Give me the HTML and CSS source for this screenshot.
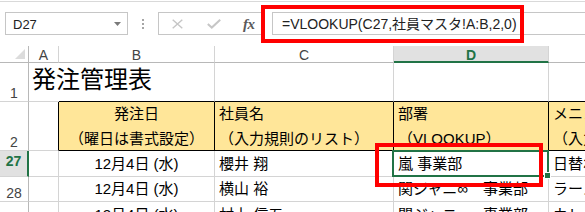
FILE: index.html
```html
<!DOCTYPE html>
<html lang="ja">
<head>
<meta charset="utf-8">
<title>発注管理表</title>
<link rel="stylesheet" href="styles.css">
</head>
<body>
<div class="app">
  <div class="toolbar">
    <div class="namebox">
      <span class="namebox-text">D27</span>
      <svg class="caret" width="7" height="4" viewBox="0 0 7 4"><polygon points="0,0 7,0 3.5,4" fill="#7a7a7a"/></svg>
    </div>
    <div class="grip"><i></i><i></i><i></i></div>
    <div class="fxbtns">
      <svg class="ico-x" width="11" height="10" viewBox="0 0 11 10"><path d="M0.7 0.7 L10.3 9.3 M10.3 0.7 L0.7 9.3" stroke="#c6c6c6" stroke-width="1.4" fill="none"/></svg>
      <svg class="ico-ok" width="14" height="10" viewBox="0 0 14 10"><path d="M0.8 5 L4.8 8.6 L13.2 0.8" stroke="#c6c6c6" stroke-width="2" fill="none"/></svg>
      <span class="fx">fx</span>
    </div>
    <div class="formula">=VLOOKUP(C27,社員マスタ!A:B,2,0)</div>
  </div>

  <div class="sheet">
    <!-- column headers -->
    <div class="c corner"><svg width="10" height="10" viewBox="0 0 10 10"><polygon points="10,0 10,10 0,10" fill="#dcdcdc"/></svg></div>
    <div class="c ch">A</div>
    <div class="c ch">B</div>
    <div class="c ch">C</div>
    <div class="c ch ch-sel">D</div>
    <div class="c ch">E</div>

    <!-- row 1 -->
    <div class="c rh">1</div>
    <div class="c title-cell"><span class="title">発注管理表</span></div>
    <div class="c top-edge"></div>
    <div class="c top-edge"></div>
    <div class="c top-edge"></div>
    <div class="c top-edge"></div>

    <!-- row 2 -->
    <div class="c rh">2</div>
    <div class="c before-head"></div>
    <div class="c head head-center"><span>発注日</span><span>（曜日は書式設定）</span></div>
    <div class="c head"><span>社員名</span><span>（入力規則のリスト）</span></div>
    <div class="c head"><span>部署</span><span>（VLOOKUP）</span></div>
    <div class="c head"><span>メニュー</span><span>（入力規則のリスト）</span></div>

    <!-- row 27 -->
    <div class="c rh rh-sel">27</div>
    <div class="c"></div>
    <div class="c center">12月4日 (水)</div>
    <div class="c">櫻井 翔</div>
    <div class="c sel">嵐 事業部<span class="sel-box"><span class="handle"></span></span></div>
    <div class="c">日替わり弁当</div>

    <!-- row 28 -->
    <div class="c rh">28</div>
    <div class="c"></div>
    <div class="c center">12月4日 (水)</div>
    <div class="c">横山 裕</div>
    <div class="c">関ジャニ∞　事業部</div>
    <div class="c">ラーメン</div>

    <!-- row 29 -->
    <div class="c rh">29</div>
    <div class="c"></div>
    <div class="c center">12月4日 (水)</div>
    <div class="c">村上 信五</div>
    <div class="c">関ジャニ∞　事業部</div>
    <div class="c">カレーライス</div>
  </div>

  <div class="mark mark-formula"></div>
  <div class="mark mark-cell"></div>
</div>
</body>
</html>
```

FILE: styles.css
```css
html, body {
  margin: 0;
  padding: 0;
  background: #ffffff;
}

body {
  width: 585px;
  height: 212px;
  overflow: hidden;
  font-family: "Liberation Sans", "Noto Sans CJK JP", sans-serif;
  color: #000;
}

.app {
  position: relative;
  width: 585px;
  height: 212px;
  overflow: hidden;
}

/* ---------- formula bar ---------- */
.toolbar {
  margin-top: 1px;
  height: 45px;
  box-sizing: border-box;
  border-top: 1px solid #d9d9d9;
  padding-top: 10px;
  display: flex;
  align-items: flex-start;
}

.namebox {
  margin-left: 5px;
  width: 123px;
  height: 23px;
  box-sizing: border-box;
  border: 1px solid #c6c6c6;
  display: flex;
  align-items: center;
  justify-content: space-between;
  padding: 0 6px 0 7px;
}

.namebox-text {
  font-size: 13px;
  line-height: 15px;
  color: #222;
  padding-top: 1px;
}

.caret {
  display: block;
}

.grip {
  margin-left: 14px;
  margin-top: 7px;
  display: flex;
  flex-direction: column;
  gap: 2px;
}

.grip i {
  display: block;
  width: 2px;
  height: 2px;
  background: #a6a6a6;
}

.fxbtns {
  margin-left: 14px;
  width: 107px;
  height: 23px;
  box-sizing: border-box;
  border: 1px solid #c6c6c6;
  display: flex;
  align-items: center;
  padding: 1px 0 0 13px;
}

.ico-x { display: block; }

.ico-ok {
  display: block;
  margin-left: 24px;
}

.fx {
  margin-left: 22px;
  font-family: "Liberation Serif", "DejaVu Serif", serif;
  font-style: italic;
  font-weight: bold;
  font-size: 15px;
  line-height: 15px;
  color: #5a5a5a;
  letter-spacing: -0.5px;
}

.formula {
  flex: 1;
  margin-left: 7px;
  margin-right: -3px;
  height: 23px;
  box-sizing: border-box;
  border: 1px solid #c6c6c6;
  padding: 1px 0 0 9px;
  font-size: 14px;
  line-height: 20px;
  color: #222;
  white-space: nowrap;
}

/* ---------- sheet grid ---------- */
.sheet {
  display: grid;
  width: 679px;
  grid-template-columns: 29px 30px 156px 179px 155px 130px;
  grid-template-rows: 17px 39px 49px 26px 25px 26px;
}

.c {
  box-sizing: border-box;
  border-right: 1px solid #d4d4d4;
  border-bottom: 1px solid #d4d4d4;
  display: flex;
  align-items: center;
  padding-left: 4px;
  font-size: 15px;
  line-height: 20px;
  white-space: nowrap;
  overflow: hidden;
  min-width: 0;
}

.center {
  justify-content: center;
  padding-left: 0;
}

/* headers */
.corner {
  padding: 0 3px 3px 0;
  justify-content: flex-end;
  align-items: flex-end;
  border-bottom-color: #b8b8b8;
  border-right-color: #b8b8b8;
}

.corner svg { display: block; }

.ch {
  justify-content: center;
  padding: 2px 0 0 0;
  font-size: 14px;
  line-height: 14px;
  color: #444;
  border-bottom-color: #b8b8b8;
}

.ch-sel {
  background: #e1e1e1;
  color: #217346;
  font-weight: bold;
  border-bottom: 2px solid #217346;
}

.rh {
  justify-content: center;
  align-items: flex-end;
  padding: 0 0 1px 0;
  font-size: 14px;
  line-height: 14px;
  color: #444;
  border-right-color: #b8b8b8;
}

.rh-sel {
  align-items: center;
  padding-bottom: 5px;
  background: #e1e1e1;
  color: #217346;
  font-weight: bold;
  border-right: 2px solid #217346;
}

/* row 1 */
.title-cell {
  overflow: visible;
  border-right: none;
  align-items: flex-end;
  padding: 0 0 9px 3px;
}

.title {
  font-size: 24px;
  line-height: 24px;
}

.top-edge {
  border-bottom-color: #000;
}

/* row 2 */
.before-head {
  border-right-color: #000;
}

.head {
  background: #ffe699;
  border-right-color: #000;
  border-bottom-color: #000;
  flex-direction: column;
  align-items: flex-start;
  justify-content: center;
  line-height: 25px;
}

.head-center {
  align-items: center;
  padding-left: 0;
}

/* selection */
.sel {
  position: relative;
  overflow: visible;
}

.sel-box {
  position: absolute;
  left: -2px;
  top: -1px;
  right: -1px;
  bottom: -1px;
  border: 2px solid #217346;
  box-sizing: border-box;
  z-index: 2;
}

.handle {
  position: absolute;
  right: -4px;
  bottom: -4px;
  width: 5px;
  height: 5px;
  background: #217346;
  border: 1px solid #ffffff;
}

/* red annotation frames */
.mark {
  position: absolute;
  box-sizing: border-box;
  border: 4px solid #ff0000;
  z-index: 5;
}

.mark-formula {
  left: 261px;
  top: 5px;
  width: 263px;
  height: 38px;
}

.mark-cell {
  left: 375px;
  top: 143px;
  width: 168px;
  height: 44px;
}
```
